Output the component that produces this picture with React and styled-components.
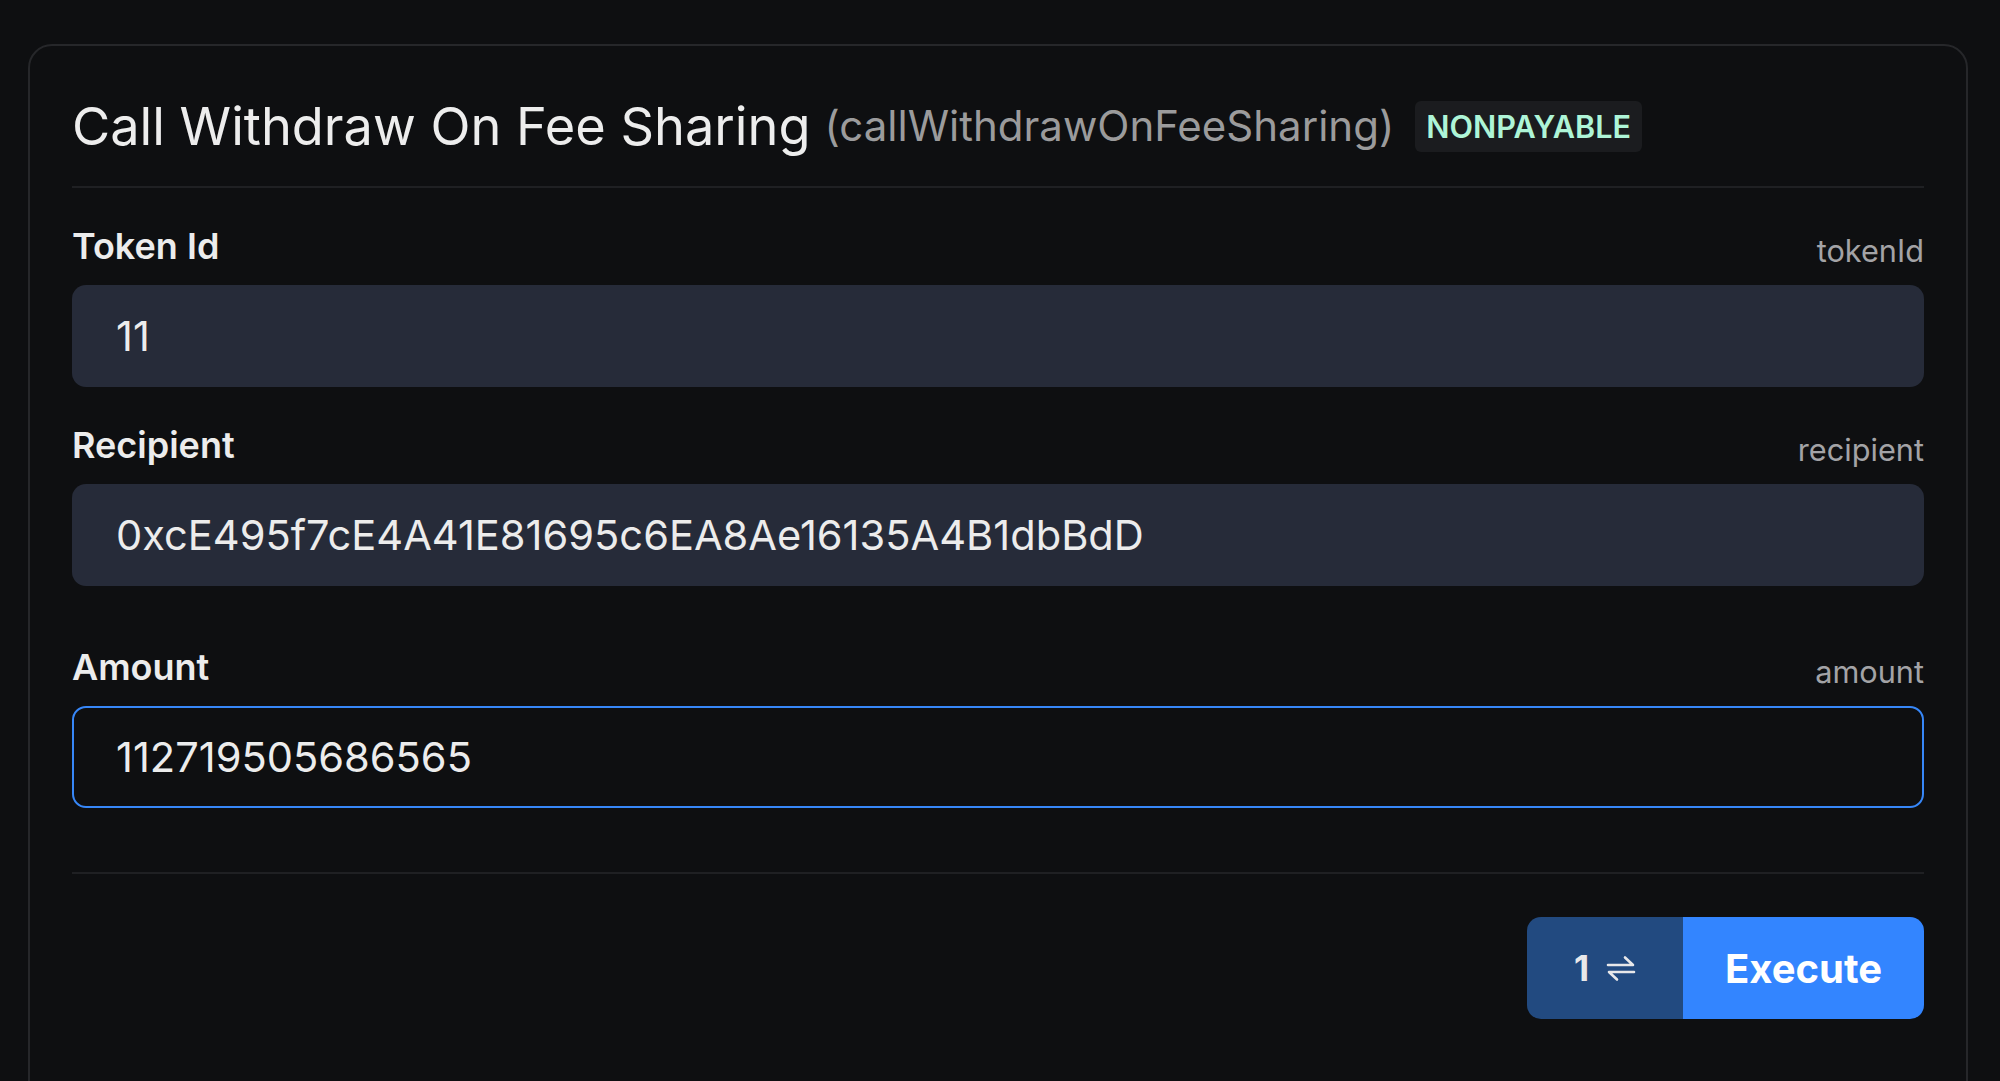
import React from "react";
import styled, { createGlobalStyle } from "styled-components";

const Global = createGlobalStyle`
  html, body {
    margin: 0;
    padding: 0;
    background: #0e0f11;
    overflow: hidden;
  }
  body {
    font-family: Inter, "Noto Sans", "Liberation Sans", sans-serif;
    color: #ececec;
  }
  * { box-sizing: border-box; }
`;

const Page = styled.div`
  padding: 44px 32px 0 28px;
  min-height: 1081px;
`;

const Card = styled.section`
  border: 2px solid #26272a;
  border-radius: 24px;
  padding: 49px 42px 90px 42px;
  background: #0e0f11;
`;

const Header = styled.header`
  display: flex;
  align-items: center;
  padding-bottom: 29px;
  border-bottom: 2px solid #1f2023;
`;

const Title = styled.h2`
  margin: 0;
  font-size: 52.3px;
  line-height: 62px;
  font-weight: 400;
  color: #ededed;
  letter-spacing: 0;
`;

const FnName = styled.span`
  margin-left: 14px;
  font-size: 42px;
  line-height: 62px;
  color: #9b9b9c;
  font-weight: 400;
`;

const Badge = styled.span`
  margin-left: 21px;
  height: 51px;
  display: inline-flex;
  align-items: center;
  padding: 0 11px;
  border-radius: 6px;
  background: #1b1c1f;
  color: #aef5d7;
  font-size: 30.6px;
  font-weight: 600;
  letter-spacing: 0;
`;

const Fields = styled.div`
  display: flex;
  flex-direction: column;
  padding-top: 33px;
`;

const Field = styled.div`
  display: flex;
  flex-direction: column;
  margin-top: ${(p) => p.$gap}px;
`;

const LabelRow = styled.div`
  display: flex;
  justify-content: space-between;
  align-items: flex-end;
  margin-bottom: 14px;
`;

const Label = styled.label`
  font-size: 36px;
  line-height: 50px;
  font-weight: 600;
  color: #ececec;
`;

const ParamName = styled.span`
  font-size: 30.7px;
  line-height: 40px;
  color: #a3a3a6;
`;

const Input = styled.input`
  display: block;
  width: 100%;
  height: 102px;
  border-radius: 14px;
  font-family: inherit;
  font-size: 41.6px;
  color: #ececec;
  outline: none;
  padding: 0 ${(p) => (p.$focused ? 42 : 44)}px;
  background: ${(p) => (p.$focused ? "#0e0f11" : "#262b39")};
  border: ${(p) => (p.$focused ? "2px solid #3787f8" : "none")};
`;

const Footer = styled.div`
  margin-top: 64px;
  padding-top: 43px;
  border-top: 2px solid #1f2023;
  display: flex;
  justify-content: flex-end;
`;

const ButtonGroup = styled.div`
  display: flex;
  height: 102px;
  border-radius: 14px;
  overflow: hidden;
`;

const CountButton = styled.button`
  width: 156px;
  border: none;
  background: #224a80;
  color: #e8e8ea;
  display: flex;
  align-items: center;
  justify-content: center;
  gap: 17px;
  font-family: inherit;
  font-size: 35px;
  font-weight: 700;
  padding: 0;
`;

const ExecuteButton = styled.button`
  width: 241px;
  border: none;
  background: #3385ff;
  color: #ffffff;
  font-family: inherit;
  font-size: 40px;
  font-weight: 700;
  padding: 0;
`;

const SwapIcon = () => (
  <svg width="30" height="27" viewBox="0 0 30 27" fill="none" stroke="#e8e8ea" strokeWidth="2.6" strokeLinecap="round" strokeLinejoin="round">
    <path d="M2 10 H27 L19 2.5" />
    <path d="M28 17 H3 L11 24.5" />
  </svg>
);

const fields = [
  { label: "Token Id", name: "tokenId", value: "11", gap: 0 },
  { label: "Recipient", name: "recipient", value: "0xcE495f7cE4A41E81695c6EA8Ae16135A4B1dbBdD", gap: 33 },
  { label: "Amount", name: "amount", value: "112719505686565", gap: 56, focused: true },
];

export default function App() {
  return (
    <>
      <Global />
      <Page>
        <Card>
          <Header>
            <Title>Call Withdraw On Fee Sharing</Title>
            <FnName>(callWithdrawOnFeeSharing)</FnName>
            <Badge>NONPAYABLE</Badge>
          </Header>
          <Fields>
            {fields.map((f) => (
              <Field key={f.name} $gap={f.gap}>
                <LabelRow>
                  <Label>{f.label}</Label>
                  <ParamName>{f.name}</ParamName>
                </LabelRow>
                <Input readOnly value={f.value} $focused={f.focused} />
              </Field>
            ))}
          </Fields>
          <Footer>
            <ButtonGroup>
              <CountButton>
                <span>1</span>
                <SwapIcon />
              </CountButton>
              <ExecuteButton>Execute</ExecuteButton>
            </ButtonGroup>
          </Footer>
        </Card>
      </Page>
    </>
  );
}
